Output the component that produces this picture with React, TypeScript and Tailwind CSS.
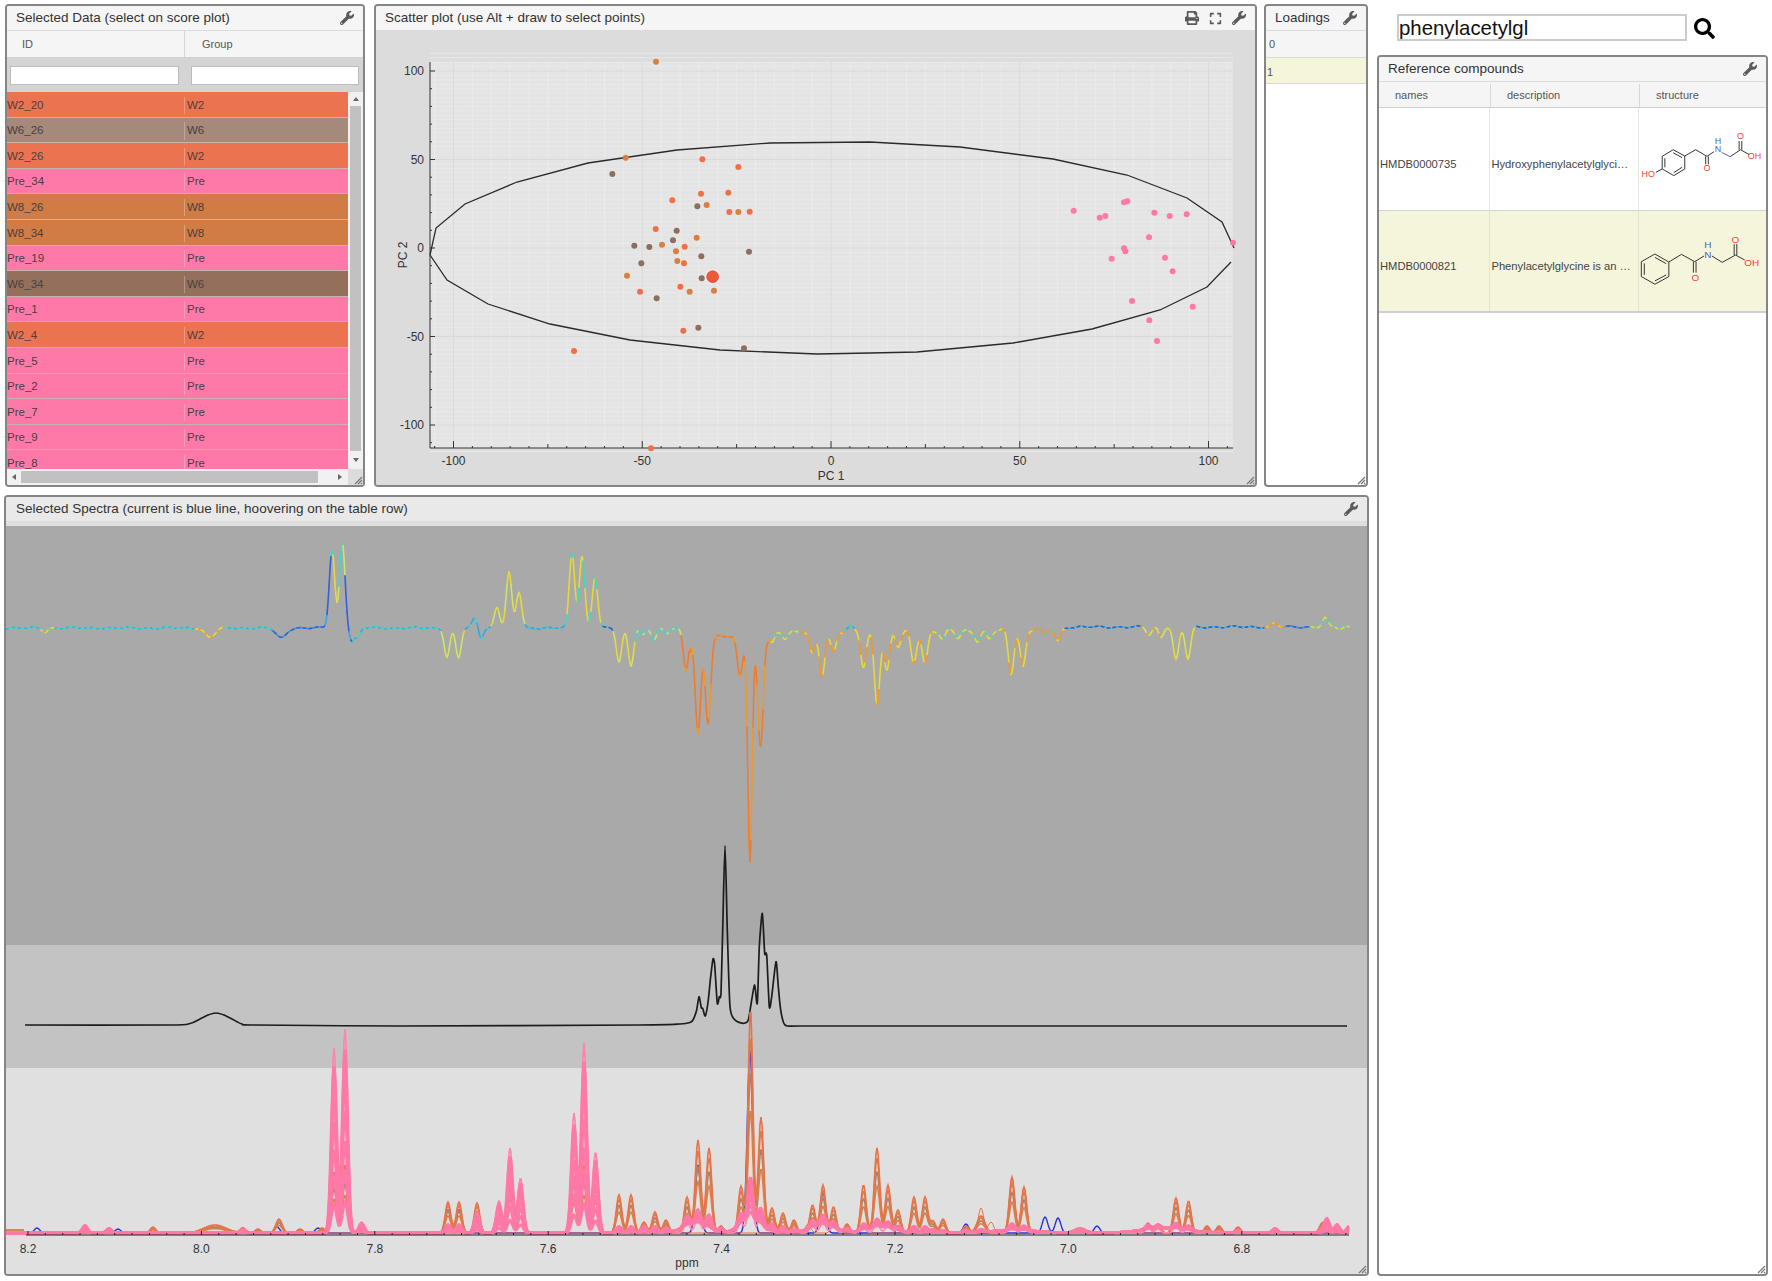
import type { ReactNode } from 'react';
import { FaPrint, FaExpand, FaWrench, FaSearch } from 'react-icons/fa';

const ROWS: [string, string, string][] = [
  ['W2_20', 'W2', 'bg-[#ec7350]'],
  ['W6_26', 'W6', 'bg-[#a5897a]'],
  ['W2_26', 'W2', 'bg-[#ec7350]'],
  ['Pre_34', 'Pre', 'bg-[#ff79a8]'],
  ['W8_26', 'W8', 'bg-[#d17c45]'],
  ['W8_34', 'W8', 'bg-[#d17c45]'],
  ['Pre_19', 'Pre', 'bg-[#ff79a8]'],
  ['W6_34', 'W6', 'bg-[#94705c]'],
  ['Pre_1', 'Pre', 'bg-[#ff79a8]'],
  ['W2_4', 'W2', 'bg-[#ec7350]'],
  ['Pre_5', 'Pre', 'bg-[#ff79a8]'],
  ['Pre_2', 'Pre', 'bg-[#ff79a8]'],
  ['Pre_7', 'Pre', 'bg-[#ff79a8]'],
  ['Pre_9', 'Pre', 'bg-[#ff79a8]'],
  ['Pre_8', 'Pre', 'bg-[#ff79a8]'],
];

/* scatter points, in 3x crop coordinates */
const COLORS: Record<string, string> = { a: '#d9803f', b: '#ef7047', c: '#8c6f5c', p: '#ff78a6' };
const LEFT_PTS: [number, number, string][] = [
  [858, 185, 'a'], [767, 473, 'a'], [997, 478, 'b'], [1105, 501, 'b'], [727, 522, 'c'], [993, 581, 'b'],
  [1075, 578, 'b'], [907, 601, 'b'], [982, 619, 'c'], [1010, 615, 'a'], [1078, 636, 'b'], [1105, 636, 'a'],
  [1139, 635, 'b'], [857, 687, 'b'], [920, 692, 'c'], [980, 713, 'a'], [909, 721, 'c'], [793, 737, 'c'],
  [838, 741, 'c'], [876, 734, 'a'], [944, 740, 'b'], [918, 754, 'a'], [1137, 755, 'c'], [994, 769, 'c'],
  [922, 783, 'a'], [942, 790, 'b'], [814, 790, 'c'], [771, 827, 'a'], [995, 835, 'c'], [931, 860, 'b'],
  [810, 875, 'b'], [959, 875, 'a'], [1032, 872, 'a'], [860, 895, 'c'], [940, 992, 'b'], [985, 983, 'c'],
  [1122, 1045, 'c'], [612, 1053, 'b'], [843, 1345, 'b'],
];
const RIGHT_PTS: [number, number][] = [
  [611, 632], [689, 653], [706, 648], [762, 607], [772, 604], [853, 638], [899, 648], [950, 643], [1089, 728],
  [837, 712], [762, 745], [766, 754], [725, 776], [885, 773], [908, 814], [786, 903], [968, 920], [838, 961], [861, 1023],
];

const ELLIPSE: [number, number][] = [
  [430, 255], [436, 228], [465, 204], [517, 182], [588, 163], [677, 150], [770, 143], [870, 142], [960, 147],
  [1053, 159], [1127, 175], [1187, 198], [1222, 222], [1234, 248],
];
const ELLIPSE_LOW: [number, number][] = [
  [1231, 262], [1207, 287], [1160, 310], [1092, 329], [1013, 343], [917, 352], [870, 353], [817, 354], [720, 350],
  [630, 340], [550, 324], [488, 304], [447, 280], [430, 255],
];

const X_TICK = (v: number) => 831 + v * 3.775;
const Y_TICK = (v: number) => 248 - v * 1.77;

function range(a: number, b: number, step: number) {
  const out: number[] = [];
  for (let v = a; v <= b; v += step) out.push(v);
  return out;
}

function line(pts: [number, number][]) {
  return pts.map((p) => p.join(',')).join(' ');
}

/* catmull-rom through the points, keeps the spectrum round at its peaks */
function smooth(pts: [number, number][]) {
  let d = `M${pts[0][0]} ${pts[0][1]}`;
  for (let i = 0; i < pts.length - 1; i++) {
    const p0 = pts[Math.max(i - 1, 0)];
    const p1 = pts[i];
    const p2 = pts[i + 1];
    const p3 = pts[Math.min(i + 2, pts.length - 1)];
    const t = 0.12;
    d += `C${(p1[0] + (p2[0] - p0[0]) * t).toFixed(1)} ${(p1[1] + (p2[1] - p0[1]) * t).toFixed(1)} ${(p2[0] - (p3[0] - p1[0]) * t).toFixed(1)} ${(p2[1] - (p3[1] - p1[1]) * t).toFixed(1)} ${p2[0]} ${p2[1]}`;
  }
  return d;
}

/* [x, orange top, pink top, sigma] */
const NMR: [number, number, number, number?][] = [
  [37, 0, 0], [85, 0, 1225], [109, 0, 1228], [153, 1227, 0], [215, 1225, 0, 11], [243, 1228, 1229], [258, 1229, 0], [279, 1219, 0, 3.2],
  [300, 1229, 0], [322, 1228, 0],
  [334, 1172, 1048], [345, 1165, 1029], [361.6, 1228, 1222],
  [448, 1202, 1224], [459, 1202, 1224], [477, 1203, 1212], [499, 1208, 1201], [510, 1186, 1148], [520.5, 1192, 1178],
  [574, 1180, 1113], [584, 1165, 1043], [595.5, 1190, 1152],
  [619, 1195, 1226], [631, 1195, 1226], [644, 1222, 1226], [655, 1212, 1226], [666, 1220, 1228], [687, 1197, 1222],
  [698, 1140, 1217], [709, 1148, 1218], [721, 1226, 1229],
  [741, 1186, 1222], [750.5, 1008, 1187, 2.4], [761, 1117, 1214], [772, 1208, 1224], [783, 1213, 1226], [794, 1220, 1229],
  [812.5, 1205, 1226], [823, 1185, 1222], [833.5, 1207, 1226], [847, 1224, 1229],
  [863.5, 1185, 1226], [877, 1148, 1224], [888, 1185, 1226], [898, 1210, 1228], [914, 1197, 1226], [925, 1197, 1226],
  [933, 1221, 1229], [943, 1219, 1230], [966, 1226, 1230], [981, 1216, 1230, 4], [1012, 1177, 1226], [1024, 1187, 1228],
  [1080, 1228, 1229, 6], [1148, 1223, 1228], [1158, 1224, 1229], [1176, 1198, 1227], [1188.5, 1201, 1228],
  [1207, 1226, 1232], [1219, 1226, 1232], [1238, 1227, 1230], [1275, 1229, 1228], [1322, 1224, 1230], [1327, 1226, 1218],
  [1337, 1224, 1224], [1349, 1226, 1226],
];
const BLUE: [number, number][] = [[37, 1228], [118, 1229], [277, 1227], [318, 1228], [448, 1210], [459, 1210], [698, 1165], [750, 1050], [823, 1192], [966, 1224], [1045, 1217], [1058, 1218], [1097, 1226]];
const THIN_ORANGE: [number, number][] = [[808, 1224], [834, 1224], [862, 1226], [981, 1208], [991, 1222], [1012, 1177], [1024, 1187]];
const PINK_HUMPS: [number, number, number][] = [[695, 9, 12], [750, 14, 10], [822, 8, 12], [880, 6, 14], [1015, 3, 20], [1165, 5, 22]];

const BASE = 1233;
function nmrPath(peaks: [number, number, number?][], from = 5, to = 1349) {
  let d = '';
  for (let x = from; x <= to; x += 1) {
    let y = 0;
    for (const [px, h, s] of peaks) {
      const sg = s ?? 2.7;
      if (Math.abs(x - px) < sg * 5) y += h * Math.exp(-((x - px) ** 2) / (2 * sg * sg));
    }
    d += `${x === from ? 'M' : 'L'}${x} ${(BASE - y).toFixed(1)}`;
  }
  return d;
}
const orangePeaks = (k: number) => NMR.filter((p) => p[1] > 0).map((p) => [p[0], (BASE - p[1]) * k, p[3]] as [number, number, number?]);
const pinkPeaks = (k: number) => NMR.filter((p) => p[2] > 0).map((p) => [p[0], (BASE - p[2]) * k, p[3]] as [number, number, number?]);

/* covariance trace */
const COV: [number, number][] = [
  [45, 632], [210, 637], [281, 638], [332, 550], [342.4, 543], [352, 641], [358, 637], [447, 657], [458.5, 658], [475, 618], [481, 638],
  [497, 607], [509, 573], [519, 592], [572, 553], [582, 556], [595, 577], [619, 662], [631, 665], [643, 635], [654, 640], [666, 634],
  [686, 670], [698, 735], [708, 724], [740, 677], [750, 862], [760.5, 748], [772, 642], [785, 637], [796, 634], [812.5, 655], [822, 674], [833.5, 653],
  [850, 628], [863.5, 666], [877, 703], [887, 671], [898, 647], [913.6, 663], [925, 663], [943, 640], [958, 637], [978, 640], [989, 640],
  [1011, 673], [1023, 667], [1045, 637], [1058, 641], [1149, 635], [1161, 637], [1176, 660], [1188, 659],
  [1275, 623], [1325, 618], [1340, 629],
];
function covBase(x: number) {
  if (x < 690) return 628;
  if (x < 770) return 636;
  if (x < 1000) return 632 - (x - 770) * 0.005;
  if (x < 1070) return 631 - (x - 1000) * 0.05;
  return 627;
}
function covY(x: number) {
  let y = covBase(x);
  for (const [px, top] of COV) {
    const sg = top === 637 || top === 638 ? (px < 300 ? 5 : 2.4) : px === 750 ? 2.2 : 2.7;
    y += (top - covBase(px)) * Math.exp(-((x - px) ** 2) / (2 * sg * sg));
  }
  const ripple = x > 770 && x < 1060 ? 1.8 : 0.7;
  return y + Math.sin(x * 0.33) * ripple + Math.sin(x * 0.13 + 1) * ripple * 0.6;
}
const BLUEC = '#3461d6';
const LB = '#3aa6e0';
const CY = '#42d6c4';
const YL = '#e6d83a';
const GY = '#cde36a';
const OR = '#f0972e';
const DO = '#f07c2c';
const COV_COLORS: [number, string, string][] = [
  [40, CY, LB], [55, YL, CY], [195, CY, LB], [225, YL, OR], [270, CY, LB], [330, BLUEC, LB], [336, YL, CY], [344, CY, GY], [352, BLUEC, LB],
  [440, CY, LB], [465, GY, YL], [490, LB, CY], [525, YL, GY], [565, LB, CY], [600, YL, CY], [612, BLUEC, CY], [635, YL, GY],
  [680, CY, GY], [770, DO, OR], [800, YL, CY], [845, OR, YL], [855, CY, LB], [935, YL, OR], [1000, YL, CY], [1035, YL, OR],
  [1055, OR, CY], [1065, OR, YL], [1140, BLUEC, CY], [1165, GY, OR], [1195, YL, GY], [1265, BLUEC, CY], [1285, OR, YL],
  [1310, BLUEC, LB], [1349, YL, CY],
];
function covColor(x: number) {
  const band = COV_COLORS.find((c) => x < c[0]) ?? COV_COLORS[COV_COLORS.length - 1];
  return Math.floor(x / 2) % 3 === 0 ? band[2] : band[1];
}

const BLACK: [number, number][] = [
  [25, 1025], [170, 1025], [190, 1023.5], [200, 1019], [208, 1015], [216, 1013], [224, 1015], [232, 1019], [242, 1024], [255, 1025], [400, 1026], [640, 1025], [680, 1024], [690, 1022.5],
  [693, 1020], [696.7, 1010], [699, 996.7], [701.3, 1007.7], [702.7, 1008.3], [705.3, 1016], [708.3, 1000], [710.7, 976.7], [713, 959], [714.7, 965], [717.3, 1003.3],
  [719.3, 996.7], [721, 993.3], [722.7, 930], [725, 845.7], [727.3, 930], [730, 1006.7], [735, 1020], [743.3, 1023.3], [748.3, 1020], [751.7, 1000], [754.7, 985],
  [757.3, 1003.3], [759.3, 946.7], [762.3, 913.3], [764.7, 953.3], [766.7, 955], [769.3, 1006.7], [771.7, 996.7], [776, 961.7], [778.3, 986.7], [780.7, 1010],
  [785, 1025], [800, 1026], [900, 1026], [1347, 1026],
];

function Wrench({ className = '' }: { className?: string }) {
  return <FaWrench className={`text-[#5a5a5a] w-[14px] h-[14px] ${className}`} />;
}

function Grip() {
  return (
    <svg className="absolute right-0 bottom-0" width="10" height="10" viewBox="0 0 10 10">
      <path d="M9 2L2 9M9 5L5 9M9 8L8 9" stroke="#777" strokeWidth="1.2" />
    </svg>
  );
}

function Panel({ title, icons, className, titleBg = 'bg-[#f5f5f5]', indent = false, children }: { title: string; icons?: ReactNode; className: string; titleBg?: string; indent?: boolean; children?: ReactNode }) {
  return (
    <div className={`relative flex flex-col overflow-hidden rounded-[4px] border-2 border-[#858585] bg-white ${className}`}>
      <div className={`flex h-[25px] flex-shrink-0 items-center justify-between border-b border-[#dcdcdc] pl-[9px] pr-[9px] text-[13.5px] text-[#333] ${titleBg}`}>
        <span className={`whitespace-nowrap ${indent ? 'ml-px' : ''}`}>{title}</span>
        <div className="flex items-center gap-[10px]">{icons ?? <Wrench />}</div>
      </div>
      {children}
      <Grip />
    </div>
  );
}

function Triangle({ d }: { d: string }) {
  return (
    <svg width="8" height="8" viewBox="0 0 8 8" className="flex-shrink-0">
      <path d={d} fill="#666" />
    </svg>
  );
}

function SelectedData() {
  return (
    <Panel title="Selected Data (select on score plot)" className="w-[360px]">
      <div className="flex h-[26px] flex-shrink-0 bg-[#f5f5f5] text-[11px] text-[#555]">
        <div className="flex w-[178px] items-center border-r border-[#d8d8d8] pl-[15px]">ID</div>
        <div className="flex flex-1 items-center pl-[17px]">Group</div>
      </div>
      <div className="flex h-[35px] flex-shrink-0 items-center gap-[12px] border-t border-[#cfcfcf] bg-[#d4d4d4] pl-[3px] pr-[5px]">
        <input readOnly className="h-[19px] w-[169px] border border-[#bcbcbc] bg-white" />
        <input readOnly className="h-[19px] w-[168px] border border-[#bcbcbc] bg-white" />
      </div>
      <div className="flex min-h-0 flex-1">
        <div className="min-w-0 flex-1 overflow-hidden">
          {ROWS.map(([id, group, bg]) => (
            <div key={id} className={`flex h-[25.6px] items-center border-b border-[#c9b3b0] pt-[2px] text-[11.5px] text-[#4a4040] ${bg}`}>
              <div className="w-[178px] border-r border-[#ffffff44]">{id}</div>
              <div className="pl-[2px]">{group}</div>
            </div>
          ))}
        </div>
        <div className="flex w-[15px] flex-col items-center bg-[#f1f1f1]">
          <div className="flex h-[14px] items-center justify-center"><Triangle d="M4 2L7 6H1Z" /></div>
          <div className="w-[11px] flex-1 bg-[#c1c1c1]" />
          <div className="flex h-[18px] items-center justify-center"><Triangle d="M1 2H7L4 6Z" /></div>
        </div>
      </div>
      <div className="flex h-[16px] flex-shrink-0 items-center bg-[#f1f1f1]">
        <div className="flex w-[14px] justify-center"><Triangle d="M6 1V7L2 4Z" /></div>
        <div className="h-[12px] w-[297px] bg-[#c1c1c1]" />
        <div className="flex flex-1 justify-end pr-[4px]"><Triangle d="M2 1V7L6 4Z" /></div>
        <div className="h-full w-[15px] bg-[#dcdcdc]" />
      </div>
    </Panel>
  );
}

function ScatterPlot() {
  return (
    <Panel
      title="Scatter plot (use Alt + draw to select points)"
      className="w-[883px]"
      icons={
        <>
          <FaPrint className="h-[14px] w-[14px] text-[#5a5a5a]" />
          <FaExpand className="h-[13px] w-[13px] text-[#5a5a5a]" />
          <Wrench />
        </>
      }
    >
      <svg className="block flex-1" viewBox="376 31 879 454" preserveAspectRatio="none">
        <rect x="376" y="31" width="879" height="454" fill="#dcdcdc" />
        <rect x="430" y="62" width="803" height="386" fill="#e4e4e4" />
        {range(-115, 110, 2.5).map((v) => (
          <line key={v} x1="430" x2="1233" y1={Y_TICK(v)} y2={Y_TICK(v)} stroke="#e9e9e9" />
        ))}
        {range(-105, 105, 5).map((v) => (
          <line key={v} x1={X_TICK(v)} x2={X_TICK(v)} y1="62" y2="448" stroke={v % 50 === 0 ? '#dadada' : '#ebebeb'} />
        ))}
        {[-100, -50, 0, 50, 100].map((v) => (
          <line key={v} x1="430" x2="1233" y1={Y_TICK(v)} y2={Y_TICK(v)} stroke="#dadada" />
        ))}
        <polyline points={line(ELLIPSE)} fill="none" stroke="#2a2a2a" strokeWidth="1.3" />
        <polyline points={line(ELLIPSE_LOW)} fill="none" stroke="#2a2a2a" strokeWidth="1.3" />
        <path d="M430 62V448H1233" fill="none" stroke="#333" />
        {range(-105, 105, 5).map((v) => (
          <line key={v} x1={X_TICK(v)} x2={X_TICK(v)} y1="448" y2={v % 50 === 0 ? 441 : v % 25 === 0 ? 444 : 446} stroke="#333" />
        ))}
        {range(-110, 100, 10).map((v) => (
          <line key={v} x1="430" x2={v % 50 === 0 ? 435 : 432} y1={Y_TICK(v)} y2={Y_TICK(v)} stroke="#333" />
        ))}
        {[-100, -50, 0, 50, 100].map((v) => (
          <text key={v} x={X_TICK(v)} y="465" textAnchor="middle" fontSize="12" fill="#333">{v}</text>
        ))}
        {[-100, -50, 0, 50, 100].map((v) => (
          <text key={v} x="424" y={Y_TICK(v) + 4} textAnchor="end" fontSize="12" fill="#333">{v}</text>
        ))}
        <text x="831" y="480" textAnchor="middle" fontSize="12" fill="#333">PC 1</text>
        <text x="407" y="255" textAnchor="middle" fontSize="12" fill="#333" transform="rotate(-90 407 255)">PC 2</text>
        {LEFT_PTS.map(([x, y, c]) => (
          <circle key={`${x}-${y}`} cx={x / 3 + 370} cy={y / 3} r="3" fill={COLORS[c]} />
        ))}
        {RIGHT_PTS.map(([x, y]) => (
          <circle key={`${x}-${y}`} cx={x / 3 + 870} cy={y / 3} r="3" fill={COLORS.p} />
        ))}
        <circle cx={1028 / 3 + 370} cy={830 / 3} r="7.5" fill="#ffffff" opacity="0.5" />
        <circle cx={1028 / 3 + 370} cy={830 / 3} r="6" fill="#f0583a" stroke="#c8402c" strokeWidth="0.6" />
      </svg>
    </Panel>
  );
}

function Loadings() {
  return (
    <Panel title="Loadings" className="w-[104px]">
      <div className="flex h-[26px] flex-shrink-0 items-center bg-[#f5f5f5] pl-[3px] text-[11px] text-[#555]">0</div>
      <div className="flex h-[27px] flex-shrink-0 items-center border-y border-[#d8d8d8] bg-[#f5f5dc] pl-px pt-[4px] text-[11px] text-[#555]">1</div>
    </Panel>
  );
}

function Spectra() {
  const segs: { d: string; c: string }[] = [];
  for (let x = 5; x < 1349; x += 2) {
    segs.push({ d: `M${x} ${covY(x).toFixed(1)}L${x + 1} ${covY(x + 1).toFixed(1)}L${x + 2} ${covY(x + 2).toFixed(1)}`, c: covColor(x) });
  }
  const humps = PINK_HUMPS as [number, number, number?][];
  return (
    <Panel title="Selected Spectra (current is blue line, hoovering on the table row)" className="h-[781px] w-[1365px]" titleBg="bg-[#e9e9e9]" indent>
      <div className="h-[4px] flex-shrink-0 bg-[#dfdfdf]" />
      <svg className="block flex-1" viewBox="6 526 1361 748" preserveAspectRatio="none">
        <rect x="6" y="526" width="1361" height="419" fill="#a9a9a9" />
        <rect x="6" y="945" width="1361" height="123" fill="#c3c3c3" />
        <rect x="6" y="1068" width="1361" height="206" fill="#e0e0e0" />
        {segs.map((s, i) => (
          <path key={i} d={s.d} fill="none" stroke={s.c} strokeWidth="1.6" strokeLinecap="round" />
        ))}
        <path d={smooth(BLACK)} fill="none" stroke="#1c1c1c" strokeWidth="1.7" strokeLinejoin="round" />
        <path d={nmrPath(BLUE.map(([x, t]) => [x, BASE - t] as [number, number]))} fill="none" stroke="#2a30d8" strokeWidth="1.4" />
        <path d={nmrPath(orangePeaks(0.72))} fill="none" stroke="#a5806a" strokeWidth="1.6" />
        <path d={nmrPath(orangePeaks(0.55))} fill="none" stroke="#d8804a" strokeWidth="1.6" />
        <path d={nmrPath(THIN_ORANGE.map(([x, t]) => [x, BASE - t] as [number, number]))} fill="none" stroke="#e8734a" strokeWidth="1" />
        <path d={nmrPath(orangePeaks(0.88))} fill="none" stroke="#d8804a" strokeWidth="1.6" />
        <path d={nmrPath(orangePeaks(1))} fill="none" stroke="#e8734a" strokeWidth="1.6" />
        <path d={nmrPath(pinkPeaks(1))} fill="none" stroke="#ff84ae" strokeWidth="1.6" />
        {[0.9, 0.75, 0.6, 0.45, 0.3, 0.15].map((k) => (
          <path key={k} d={nmrPath([...pinkPeaks(k), ...humps])} fill="none" stroke="#ff78a6" strokeWidth="3" />
        ))}
        <path d="M5 1230H24" stroke="#c98a5a" strokeWidth="2" />
        <path d="M26 1235H1349" stroke="#222" strokeWidth="1.2" />
        {range(0, 76, 1).map((i) => {
          const x = 28 + i * 17.34;
          return <line key={i} x1={x} x2={x} y1="1235" y2={i % 10 === 0 ? 1231 : 1233} stroke="#222" />;
        })}
        {['8.2', '8.0', '7.8', '7.6', '7.4', '7.2', '7.0', '6.8'].map((t, i) => (
          <text key={t} x={28 + i * 173.4} y="1253" textAnchor="middle" fontSize="12" fill="#333">{t}</text>
        ))}
        <text x="687" y="1267" textAnchor="middle" fontSize="12" fill="#333">ppm</text>
      </svg>
    </Panel>
  );
}

function Bond({ p }: { p: string }) {
  return <path d={p} fill="none" stroke="#333" strokeWidth="3" />;
}

function Label({ x, y, t, c, s }: { x: number; y: number; t: string; c: string; s: number }) {
  return <text x={x} y={y} fontSize={s} fill={c} textAnchor="middle" dominantBaseline="central">{t}</text>;
}

function Hydroxy() {
  return (
    <svg width="128" height="101" viewBox="57 0 384 303" className="mt-px block">
      <Bond p="M127 142L160 122L195 141L195 180L162 200L127 180Z" />
      <Bond p="M135 148L135 175M160 131L187 146M187 175L162 191" />
      <Bond p="M195 141L228 122L262 142L283 128" />
      <Bond p="M258 142V166M266 142V166" />
      <path d="M306 130L332 143" stroke="#4a5fc0" strokeWidth="3" />
      <Bond p="M332 143L363 122L390 137" />
      <Bond p="M359 122V96M367 122V96" />
      <path d="M127 180L108 190" stroke="#333" strokeWidth="3" />
      <Label x={85} y={196} t="HO" c="#f04040" s={27} />
      <Label x={262} y={178} t="O" c="#f04040" s={27} />
      <Label x={295} y={120} t="N" c="#4a5fc0" s={27} />
      <Label x={295} y={95} t="H" c="#4a5fc0" s={27} />
      <Label x={363} y={82} t="O" c="#f04040" s={27} />
      <Label x={405} y={141} t="OH" c="#f04040" s={27} />
    </svg>
  );
}

function Phenyl() {
  return (
    <svg width="128" height="101" viewBox="57 306 384 303" className="mt-[3px] block">
      <Bond p="M64 455L105 432L147 456L147 500L105 523L64 500Z" />
      <Bond p="M73 460V495M105 442L139 461M139 495L105 513" />
      <Bond p="M147 456L185 433L225 455L253 438" />
      <Bond p="M221 455V488M229 455V488" />
      <Bond p="M277 438L308 457L348 435L376 450" />
      <Bond p="M344 435V402M352 435V402" />
      <Label x={227} y={502} t="O" c="#f04040" s={30} />
      <Label x={265} y={432} t="N" c="#4a5fc0" s={30} />
      <Label x={265} y={404} t="H" c="#4a5fc0" s={30} />
      <Label x={348} y={388} t="O" c="#f04040" s={30} />
      <Label x={397} y={457} t="OH" c="#f04040" s={30} />
    </svg>
  );
}

function ReferenceCompounds() {
  return (
    <Panel title="Reference compounds" className="mt-[14px] min-h-0 flex-1">
      <div className="flex h-[26px] flex-shrink-0 border-b border-[#cfcfcf] bg-[#f5f5f5] pt-[2px] text-[11px] text-[#555]">
        <div className="flex w-[112px] items-center border-r border-[#d8d8d8] pl-[16px]">names</div>
        <div className="flex w-[149px] items-center border-r border-[#d8d8d8] pl-[16px]">description</div>
        <div className="flex flex-1 items-center pl-[16px]">structure</div>
      </div>
      <div className="flex h-[103px] flex-shrink-0 items-center border-b border-[#d4d4d4] text-[11.2px] text-[#444]">
        <div className="flex h-full w-[112px] items-center border-r border-[#e4e4e4] pl-px pt-[10px]">HMDB0000735</div>
        <div className="flex h-full w-[149px] items-center whitespace-nowrap border-r border-[#e4e4e4] pl-px pt-[10px]">Hydroxyphenylacetylglyci…</div>
        <Hydroxy />
      </div>
      <div className="flex h-[102px] flex-shrink-0 items-center border-b-2 border-[#cfcfcf] bg-[#f5f5dc] text-[11.2px] text-[#444]">
        <div className="flex h-full w-[112px] items-center border-r border-[#e4e4d0] pl-px pt-[10px]">HMDB0000821</div>
        <div className="flex h-full w-[149px] items-center whitespace-nowrap border-r border-[#e4e4d0] pl-px pt-[10px]">Phenylacetylglycine is an …</div>
        <Phenyl />
      </div>
    </Panel>
  );
}

export default function App() {
  return (
    <div className="flex h-[1281px] w-[1772px] bg-white pb-[5px] pl-[4px] pt-[4px] font-['Liberation_Sans',Arial,sans-serif]">
      <div className="flex w-[1365px] flex-col gap-[8px]">
        <div className="ml-px flex h-[483px] gap-[9px]">
          <SelectedData />
          <div className="flex gap-[7px]">
            <ScatterPlot />
            <Loadings />
          </div>
        </div>
        <Spectra />
      </div>
      <div className="ml-[8px] flex w-[391px] flex-col">
        <div className="flex h-[37px] items-center gap-[7px] pl-[20px] pt-[10px]">
          <input readOnly value="phenylacetylgl" className="h-[27px] w-[290px] border-2 border-[#cccccc] bg-white pt-[2px] text-[20.4px] text-[#111]" />
          <FaSearch className="mt-[2px] h-[21px] w-[21px] text-black" />
        </div>
        <ReferenceCompounds />
      </div>
    </div>
  );
}
